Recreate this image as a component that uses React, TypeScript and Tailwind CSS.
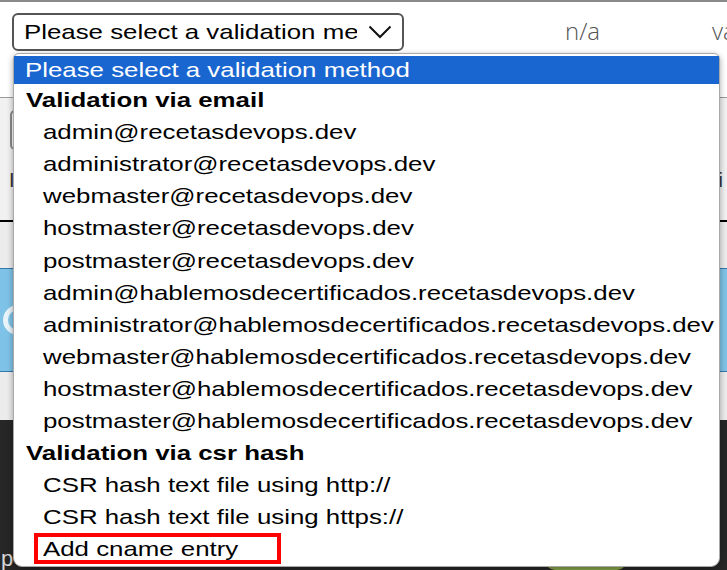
import React from "react";

const EMAIL_DOMAINS = ["recetasdevops.dev", "hablemosdecertificados.recetasdevops.dev"];
const EMAIL_USERS = ["admin", "administrator", "webmaster", "hostmaster", "postmaster"];

type Row = { label: string; kind: "selected" | "group" | "option" | "marked" };

const rows: Row[] = [
  { label: "Validation via email", kind: "group" },
  ...EMAIL_DOMAINS.flatMap((d) =>
    EMAIL_USERS.map((u) => ({ label: `${u}@${d}`, kind: "option" as const }))
  ),
  { label: "Validation via csr hash", kind: "group" },
  { label: "CSR hash text file using http://", kind: "option" },
  { label: "CSR hash text file using https://", kind: "option" },
  { label: "Add cname entry", kind: "marked" },
];

// text in the shot is rendered wide; stretch it a bit to keep the line widths
function Wide({ children, bold }: { children: React.ReactNode; bold?: boolean }) {
  return (
    <span
      className={
        "inline-block origin-left scale-x-[1.23] whitespace-nowrap text-[21px] leading-none " +
        (bold ? "font-bold" : "")
      }
    >
      {children}
    </span>
  );
}

function Chevron() {
  return (
    <svg width="24" height="14" viewBox="0 0 24 14" fill="none" stroke="#111" strokeWidth={2} className="shrink-0">
      <path d="M1.5 1.5 L12 12 L22.5 1.5" />
    </svg>
  );
}

function Dropdown() {
  return (
    <div className="absolute left-[13px] top-[53px] w-[707px] rounded-b-[9px] rounded-t-[6px] border border-[#a9a9a9] bg-white pt-[1.5px] pb-px shadow-[0_2px_6px_rgba(0,0,0,0.35)]">
      <div className="flex h-[28px] items-center bg-[#1a66d0] pl-[11px] text-white">
        <Wide>Please select a validation method</Wide>
      </div>
      {rows.map((r) => {
        if (r.kind === "group") {
          return (
            <div key={r.label} className="flex h-[32.1px] items-center pl-[12px] text-black">
              <Wide bold>{r.label}</Wide>
            </div>
          );
        }
        if (r.kind === "marked") {
          return (
            <div key={r.label} className="flex h-[32.1px] items-center">
              <div className="ml-[20px] flex h-[31px] w-[247px] items-center border-[4px] border-[#ff0000] pl-[5px] text-black">
                <Wide>{r.label}</Wide>
              </div>
            </div>
          );
        }
        return (
          <div key={r.label} className="flex h-[32.1px] items-center pl-[29px] text-black">
            <Wide>{r.label}</Wide>
          </div>
        );
      })}
    </div>
  );
}

export default function App() {
  return (
    <div className="relative flex h-[570px] w-[727px] flex-col overflow-hidden bg-white font-['Liberation_Sans',Arial,sans-serif]">
      <div className="h-[2px] bg-[#8a8a8a]" />

      {/* header row */}
      <div className="flex h-[98px] items-start pl-[12px] pt-[11px]">
        <div className="flex h-[38px] w-[392px] shrink-0 items-center justify-between rounded-[6px] border-2 border-[#555] pl-[10px] pr-[10px]">
          <div className="w-[333px] overflow-hidden pt-[4px] text-black">
            <Wide>Please select a validation method</Wide>
          </div>
          <Chevron />
        </div>
        <span className="ml-[161px] mt-[6px] shrink-0 font-['Open_Sans',sans-serif] text-[24px] font-light leading-none text-[#555]">
          n/a
        </span>
        <span className="ml-[112px] mt-[6px] shrink-0 font-['Open_Sans',sans-serif] text-[24px] font-light leading-none text-[#555]">
          validation
        </span>
      </div>

      {/* form section under the list */}
      <div className="flex h-[128px] flex-col border-t border-[#9a9a9a] bg-[#f1f1f1]">
        <div className="mx-[10px] mt-[12px] h-[40px] rounded-[5px] border-2 border-[#8a8a8a] bg-white" />
        <div className="mt-[20px] flex justify-between pl-[9px] pr-[4px] text-[20px] leading-none text-[#333]">
          <span>I</span>
          <span>i</span>
        </div>
      </div>
      <div className="h-[2px] bg-black" />
      <div className="h-[48px] bg-[#ececec]" />
      <div className="flex h-[108px] items-center border-y border-[#3576ab] bg-[#7ec3e7] pl-[3px]">
        <div className="h-[30px] w-[30px] rounded-full border-[5px] border-[#e9f4fa]" />
      </div>
      <div className="h-[50px] bg-[#ececec]" />
      <div className="flex flex-1 items-start bg-[#262626] pt-[128px] text-[22px] leading-none text-[#d8d8d8]">
        <span className="pl-px">p</span>
        <span className="ml-[405px]">Pendiente</span>
        <span className="ml-[28px] mt-[2px] h-[20px] w-[82px] rounded-full bg-[#8aa84b]" />
      </div>

      <Dropdown />
    </div>
  );
}
